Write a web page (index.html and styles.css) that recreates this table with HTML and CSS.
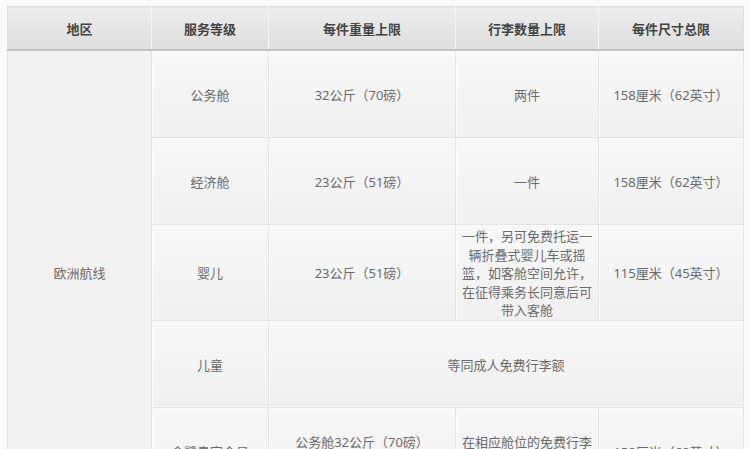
FILE: index.html
```html
<!DOCTYPE html>
<html lang="zh-CN">
<head>
<meta charset="utf-8">
<title>行李额</title>
<link rel="stylesheet" href="styles.css">
</head>
<body>
<table class="bag">
  <colgroup>
    <col class="c1"><col class="c2"><col class="c3"><col class="c4"><col class="c5">
  </colgroup>
  <thead>
    <tr>
      <th>地区</th>
      <th>服务等级</th>
      <th>每件重量上限</th>
      <th>行李数量上限</th>
      <th>每件尺寸总限</th>
    </tr>
  </thead>
  <tbody>
    <tr>
      <td class="region" rowspan="5">欧洲航线</td>
      <td>公务舱</td>
      <td>32公斤（70磅）</td>
      <td>两件</td>
      <td>158厘米（62英寸）</td>
    </tr>
    <tr>
      <td>经济舱</td>
      <td>23公斤（51磅）</td>
      <td>一件</td>
      <td>158厘米（62英寸）</td>
    </tr>
    <tr>
      <td>婴儿</td>
      <td>23公斤（51磅）</td>
      <td>一件，另可免费托运一辆折叠式婴儿车或摇篮，如客舱空间允许，在征得乘务长同意后可带入客舱</td>
      <td>115厘米（45英寸）</td>
    </tr>
    <tr>
      <td>儿童</td>
      <td colspan="3">等同成人免费行李额</td>
    </tr>
    <tr>
      <td>金鹭贵宾会员</td>
      <td>公务舱32公斤（70磅）<br>经济舱23公斤（51磅）</td>
      <td>在相应舱位的免费行李额基础上增加一件</td>
      <td>158厘米（62英寸）</td>
    </tr>
  </tbody>
</table>
</body>
</html>
```

FILE: styles.css
```css
html, body {
  margin: 0;
  padding: 0;
  background: #fafafa;
}
body {
  font-family: "Noto Sans", "Noto Sans CJK SC", sans-serif;
  font-size: 13px;
  color: #6b6b6b;
}
.bag {
  margin: 6px 0 0 7px;
  width: 736px;
  table-layout: fixed;
  border-collapse: collapse;
  background: #f2f2f2;
  border: 1px solid #e0e0e0;
}
.c1 { width: 144px; }
.c2 { width: 117px; }
.c3 { width: 187px; }
.c4 { width: 143px; }
.c5 { width: 145px; }

.bag th {
  height: 42px;
  padding: 0 6px;
  font-weight: bold;
  color: #444;
  background: linear-gradient(#ededed, #dedede);
  border-left: 1px solid #f4f4f4;
  border-bottom: 2px solid #c2c2c2;
  text-align: center;
}
.bag th:first-child { border-left: none; }

.bag td {
  height: 84px;
  padding: 2px 6px 0;
  line-height: 18.6px;
  text-align: center;
  vertical-align: middle;
  border: 1px solid #e4e4e4;
  background: linear-gradient(#f8f8f8, #f0f0f0);
  box-shadow: inset 1px 1px 0 #fbfbfb;
}
.bag td.region {
  background: #f2f2f2;
  box-shadow: none;
}
```
